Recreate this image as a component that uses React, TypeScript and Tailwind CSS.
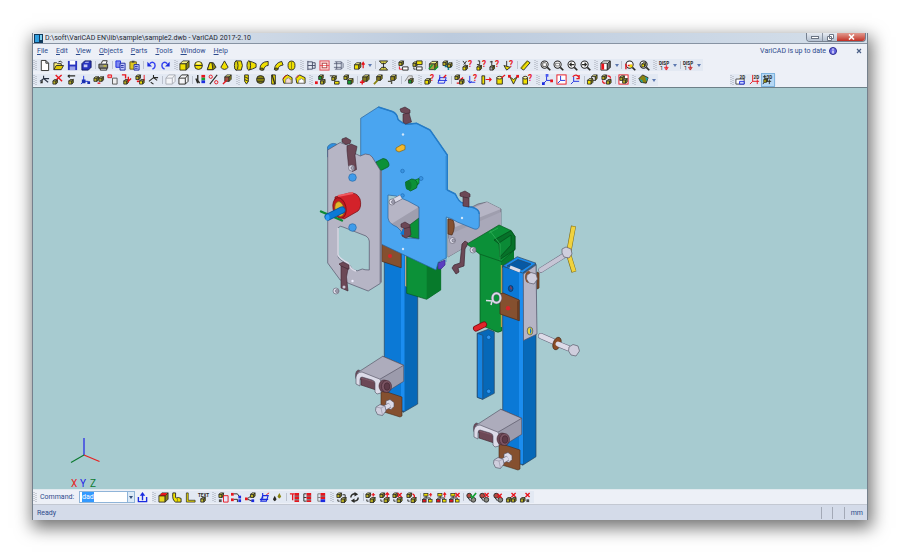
import { useEffect, useRef, useState } from "react"
import type { ReactNode } from "react"

type PathProps = { d: string; c?: string; f?: string; w?: number }
type PartProps = { x?: number; y?: number; s?: number; c?: string }

const YELLOW = "#f0e000"
const OLIVE = "#8a8410"
const RED = "#e8141c"
const BLUE = "#1a2be0"
const GREEN = "#12a032"
const INK = "#2a2a26"

// ---- small parts shared by the toolbar icons (12x12 grid) ----

function P({ d, c = INK, f = "none", w = 1 }: PathProps) {
  return <path d={d} stroke={c} fill={f} strokeWidth={w} />
}

function Cube({ x = 1, y = 1, s = 10, c = YELLOW }: PartProps) {
  const k = s * 0.32
  return (
    <g stroke={INK} strokeWidth="0.9" strokeLinejoin="round">
      <path d={`M${x} ${y + k}l${k} ${-k}h${s - k}l${-k} ${k}z`} fill="#f8f48a" />
      <path d={`M${x} ${y + k}h${s - k}v${s - k}h${k - s}z`} fill={c} />
      <path d={`M${x + s - k} ${y + k}l${k} ${-k}v${s - k}l${-k} ${k}z`} fill={OLIVE} />
    </g>
  )
}

function Ask() {
  return <text x="6.5" y="8" fontSize="9" fontWeight="700" fill={RED}>?</text>
}

function Dot({ x = 2, y = 9, c = RED }: PartProps) {
  return <rect x={x} y={y} width="3" height="3" fill={c} />
}

function Cross({ x = 6, y = 1, c = RED }: PartProps) {
  return <P d={`M${x} ${y}l4.5 4.5m0 -4.5l-4.5 4.5`} c={c} w={1.5} />
}

function Lens({ children }: { children?: ReactNode }) {
  return (
    <>
      <circle cx="5" cy="5" r="3.9" fill="#fff" stroke="#222" strokeWidth="1.1" />
      <P d="M8 8l3.2 3.2" w={1.8} />
      {children}
    </>
  )
}

function Small({ x = 1, y = 6 }: PartProps) {
  return <Cube x={x} y={y} s={5} c="#b8ae22" />
}

function Pair({ children }: { children?: ReactNode }) {
  return (
    <>
      <Small x={1} y={1} />
      <Cube x={5.5} y={6} s={5.5} c="#b8ae22" />
      <P d="M2 8v2h2" />
      {children}
    </>
  )
}

function Tree({ children }: { children?: ReactNode }) {
  return (
    <>
      <rect x="2" y="1.5" width="4.5" height="3" fill={YELLOW} stroke={INK} strokeWidth="0.8" />
      <P d="M4.5 4v3M2 8V6.5h7V8" />
      <rect x="0.5" y="8" width="4" height="3" fill={RED} stroke={INK} strokeWidth="0.8" />
      <rect x="7" y="8" width="4" height="3" fill={YELLOW} stroke={INK} strokeWidth="0.8" />
      {children}
    </>
  )
}

function Balls({ children }: { children?: ReactNode }) {
  return (
    <>
      <circle cx="3.5" cy="4" r="2.6" fill="#b04a42" stroke={INK} />
      <circle cx="8" cy="8.5" r="2.6" fill="#8a8a80" stroke={INK} />
      <P d="M2 6l3 4" />
      {children}
    </>
  )
}

function Disp({ c }: { c: string }) {
  return (
    <>
      <text x="0" y="5" fontSize="5" fontWeight="700" fill="#222">DISP</text>
      <text x="1" y="11" fontSize="6" fill="#222">1</text>
      <P d="M8 5.5v5M6 8l2 3l2-3z" c={c} w={0.9} />
    </>
  )
}

const icons: Record<string, ReactNode> = {
  New: <P d="M2.5 .5h5l3 3v8h-8zM7.5 .5v3h3" f="#fff" />,
  Open: <><P d="M1 10.5V3h3l1 1h4v2" f="#fff27a" /><P d="M1 10.5L3.5 6h8L9 10.5z" f="#e0c800" /><P d="M6 2q3-2 4 1" /></>,
  Save: <><rect x="1" y="1" width="10" height="10" fill="#2834c0" /><rect x="3" y="1" width="6" height="4" fill="#fff" /><rect x="3" y="7" width="6" height="4" fill="#9aa2e8" /></>,
  "Save all": <><path d="M1 4l3-3h7v7l-3 3H1z" fill="#2834c0" stroke="#101860" /><path d="M3 5h4v3H3zM5 2h4l-1 1H4z" fill="#c8ccf6" /></>,
  Print: <><P d="M3.5 4L5 .8h5L9 4" f="#fff" /><P d="M1 4.5h9.5V9H1z" f="#8c8c80" /><P d="M2.5 9h7v2h-7z" f="#eee" /><path d="M6 6h3v1H6z" fill={YELLOW} /></>,
  Copy: <><P d="M1 1h5v7H1z" c={BLUE} f="#7f8af0" /><P d="M5.5 3.5H11V11H5.5zM6.5 6h3M6.5 8h3" c="#1c289c" f="#c4caff" /></>,
  Paste: <><P d="M1 2h7v8H1z" c="#6b5a10" f="#e0c820" /><path d="M3 .8h3v2H3z" fill="#444" /><P d="M5.5 5H11v6H5.5zM6.5 7h3M6.5 9h3" c="#1c289c" f="#c4caff" /></>,
  Undo: <><P d="M4 4q3-3 5.5 0q1.5 4-2.5 6" c="#3240f0" w={1.5} /><path d="M1.5 2v5h5z" fill={BLUE} /></>,
  Redo: <><P d="M8 4Q5 1 2.5 4q-1.5 4 2.5 6" c="#3240f0" w={1.5} /><path d="M10.5 2v5h-5z" fill={BLUE} /></>,
  Box: <Cube />,
  Cylinder: <><circle cx="6" cy="6" r="4.3" fill={YELLOW} stroke={INK} /><P d="M2 6h8" /><ellipse cx="6" cy="3.5" rx="2.5" ry="1" fill="#fbf9a0" /></>,
  Pyramid: <><P d="M4 3h4l3 5l-3 2.5H1.5z" f={OLIVE} /><P d="M4 3h2.5l1 7.5h-6z" f={YELLOW} /></>,
  Cone: <P d="M6 1l4 7q-4 4.5-8 0z" f={YELLOW} />,
  Pipe: <><P d="M3 1h6q2.5 5 0 10H3z" f={YELLOW} /><ellipse cx="3.5" cy="6" rx="2" ry="5" fill="#d9d010" stroke={INK} /></>,
  "Conical pipe": <><P d="M3 1q4 1 8 3v4q-4 2-8 3z" f={YELLOW} /><ellipse cx="3" cy="6" rx="2" ry="5" fill="#d9d010" stroke={INK} /></>,
  Elbow: <><P d="M1 10q0-8 9-8.5V6Q6 6 5 11z" f={YELLOW} /><ellipse cx="3" cy="10" rx="2" ry="1.2" fill={OLIVE} stroke={INK} /></>,
  Bend: <><P d="M1.5 10q1-7 8-8.5l1.5 4Q6 6 5.5 10z" f={YELLOW} /><ellipse cx="3.5" cy="10" rx="2" ry="1.2" fill={OLIVE} stroke={INK} /></>,
  Sphere: <><ellipse cx="6" cy="6" rx="3.8" ry="4.8" fill={YELLOW} stroke={INK} /><P d="M6 1v10" c={OLIVE} /></>,
  Revolve: <P d="M2 1v10M2 2h5v8H2M2 6h8M7 3h3v6H7" c="#454b66" />,
  Sheet: <><rect x="1" y="1" width="10" height="10" fill="#fbd7d7" stroke="#e0404a" /><rect x="3.5" y="3.5" width="5" height="5" fill="#fff" stroke="#b04040" /><P d="M1 6h10" c={RED} w={0.6} /></>,
  Loft: <P d="M2 2h7v8H2M9 2l2 2v4l-2 2M4 2v8M1 4h8M1 8h8" c="#454b66" w={0.8} />,
  Extrude: <><Cube x={0.5} y={3} s={7} /><P d="M10 9V3M8.5 5L10 2.5L11.5 5" c={RED} w={1.3} /></>,
  Section: <><P d="M1.5 1h9L8 4H4zM1.5 11h9L8 8H4z" f="#d8d048" /><P d="M6 3v6" /></>,
  Insert: <><Small x={1} y={1} /><P d="M1.5 7v3h3" c={RED} /><P d="M5 7.5h6V11H5z" f="#fff" /></>,
  "Insert part": <><Small x={1} y={2} /><P d="M5 1h6v4H5z" f={YELLOW} /><P d="M2 8v2h2M5 7.5h6V11H5z" f="#fff" /></>,
  Group: <><Cube x={1.5} y={1.5} s={9} c="#a8a040" /><P d="M1 10l4-5M7 11l4-4" c={GREEN} w={1.5} /></>,
  Move: <><Small x={1} y={1} /><P d="M7 3v8M3 7h8" c="#0a8090" w={1.7} /><Small x={6} y={3} /></>,
  "Check 1": <><P d="M1 1l3 4M5 1L2 5" /><Cube x={1} y={6} s={5} /><Ask /></>,
  "Check 2": <><P d="M2 1h2v4H1" /><Cube x={1} y={6} s={5} /><Ask /></>,
  "Check 3": <><P d="M3 1v5M1 2h3" /><Cube x={1} y={6} s={5} c="#aaa" /><Ask /></>,
  "Check 4": <><P d="M4 1v6" /><P d="M1 6l3 5l4-3z" f={YELLOW} /><Ask /></>,
  Measure: <><P d="M1 9l7-8l3 2l-7 8z" f={YELLOW} /><P d="M1 9l7-8" c={OLIVE} w={1.5} /></>,
  "Zoom window": <Lens><P d="M3 3h3l1 1v3H3z" w={0.8} /></Lens>,
  "Zoom all": <Lens><rect x="3" y="3.5" width="4" height="3" fill="none" stroke="#555" strokeWidth="0.8" /></Lens>,
  "Zoom previous": <Lens><P d="M8 5H3M5 3L3 5l2 2" w={1.2} /></Lens>,
  "Zoom next": <Lens><P d="M2 5h5M5 3l2 2l-2 2" w={1.2} /></Lens>,
  Shade: <><P d="M1 3.5L4 1h7v7l-3 3H1zM1 3.5h7V11" f="#fff" /><path d="M1.5 4h3v6.5h-3z" fill={RED} /><P d="M8 4l3-3v7l-3 3z" f="#777" /></>,
  Rotate: <Lens><P d="M1 10V4M3 6h5" c={RED} w={1.5} /><path d="M5 5h3v3H5z" fill={YELLOW} /></Lens>,
  "Zoom part": <Lens><Cube x={3} y={3} s={4.5} /></Lens>,
  "Display 1": <Disp c={RED} />,
  "Display 2": <Disp c="#c02020" />,

  Axis: <><P d="M1 8l4-3l5 4M5 5V2M5 5h6" c="#283040" w={1.2} /><path d="M1 10l3-4v4z" fill={INK} /></>,
  Delete: <><Small x={1} y={6} /><P d="M5 6l5.5-5M4 1l7 7" c={RED} w={1.5} /></>,
  "Move back": <><P d="M2 2h8M2 2l2-1M2 2l2 2" w={1.3} /><Small x={3} y={6} /></>,
  Triad: <><P d="M4 2v6l-3 3M4 8h5" c={BLUE} /><path d="M2 6h4v4H2zM8 8h3v3H8z" fill="#1830b0" /></>,
  Mirror: <><Small x={1} y={3} /><Small x={6.5} y={3} /><P d="M5 10h3" c={RED} w={1.5} /></>,
  "Array item": <><P d="M1 1h4v3H1z" c={RED} f="#f6a0a0" /><P d="M6 4.5h5V11H6z" c="#555" f="#eee" /></>,
  "Delete part": <><P d="M1 1h4v4" c={RED} w={1.5} /><Small x={3} y={6} /><P d="M8 3v5l3-3" c={RED} w={1.5} /></>,
  "Delete set": <><Small x={1} y={1} /><P d="M2 8h6" c={RED} w={1.8} /><Cube x={5} y={6} s={5} /><P d="M10 1v6" c={RED} /></>,
  Transform: <P d="M1 8l5-4l4 3M6 4V1M6 4h5M3 9l3 2" w={1.2} />,
  Wire: <P d="M1 4.5L4 1h7v7l-3 3H1zM1 4.5h7V11M8 4.5L11 1" c="#a8acb4" f="#f4f5f8" />,
  Hidden: <P d="M1 4.5L4 1h7v7l-3 3H1zM1 4.5h7V11M8 4.5L11 1" f="#f4f5f8" />,
  Colors: <><P d="M3 1v6l2 3M1 5l2 5" w={1.5} /><path d="M7 1h4v3H7z" fill={RED} /><path d="M7 4h4v3H7z" fill={GREEN} /><path d="M7 7h4v3H7z" fill={BLUE} /></>,
  Cut: <><P d="M2 11l8-10" w={1.2} /><circle cx="3" cy="3" r="1.8" fill="none" stroke={RED} /><circle cx="9" cy="9" r="1.8" fill="none" stroke={RED} /></>,
  Blend: <><Cube x={3} y={1} s={7} c="#a05040" /><P d="M1 11l4-4" c={RED} w={1.5} /></>,
  Thread: <><P d="M4 1h4v7l-2 3l-2-3z" f={YELLOW} /><P d="M4 3l4 2M4 6l4 2" /></>,
  Hole: <><circle cx="6" cy="6" r="4.3" fill={OLIVE} stroke={INK} /><P d="M2 5h8M2 8h8" w={0.8} /></>,
  Groove: <><P d="M4 1h4v10H4z" f={YELLOW} /><P d="M4.5 1l3 10" w={1.5} /></>,
  Fillet: <><P d="M1 6q1-4 5-5l5 3v6H2z" f={YELLOW} /><P d="M4 10V6l3-2l3 3v3z" c="#888" f="#f3dada" /><P d="M1 5l4-4" c={RED} /></>,
  Chamfer: <><P d="M1 5l4-4l6 3v6H2z" f={YELLOW} /><P d="M4 10V7l3-2l3 2v3z" c="#888" f="#fff" /><P d="M1 4l3-3" c={RED} /></>,
  Union: <><Dot x={0} y={8} /><Cube x={4} y={1} s={5} c={GREEN} /><Small x={6} y={6} /></>,
  Subtract: <><P d="M1 2h5v5" f="#ddd" /><Small x={3} y={2} /><P d="M6 8h5v3H6z" f={YELLOW} /></>,
  Intersect: <><Small x={1} y={1} /><Cube x={5} y={5} s={6} c={GREEN} /></>,
  "Solid add": <><Cube x={4} y={1} s={7} c="#807820" /><P d="M1 9h5M3.5 6.5v5" c={RED} w={1.5} /></>,
  "Solid cut": <><Cube x={4} y={1} s={6} c="#807820" /><P d="M1 11l4-4" c={OLIVE} w={2} /></>,
  "Solid split": <><Cube x={4} y={1} s={6} c="#a09020" /><P d="M1 8h4v3" c="#554" w={1.5} /></>,
  Explode: <><P d="M1 8l4-6h4v3" c="#888" f="#ddd" /><Cube x={5} y={5} s={5} c={GREEN} /></>,
  "Part info": <><Cube x={1} y={5} s={6} /><Ask /></>,
  Weigh: <><P d="M1 10l2-6h7l-2 6zM3 1v6M1 7h10" c={BLUE} /><P d="M7 4l3-3" c={RED} w={1.5} /></>,
  Link: <><Small x={1} y={1} /><P d="M6 7l4-3M3 10h5" c={RED} w={1.5} /><Small x={6} y={6} /></>,
  "Link info": <><P d="M3 2v7h6M1 7l2 3l2-2" c={BLUE} /><Ask /></>,
  Dimension: <><P d="M1 2h3v9H1z" f={YELLOW} /><P d="M5 6h6M9 4l2 2l-2 2" c={RED} w={1.3} /></>,
  "Cyl info": <><P d="M2 4h6v7H2z" f={YELLOW} /><ellipse cx="5" cy="4" rx="3" ry="1.5" fill="#fbf9a0" stroke={INK} /><P d="M7 4l4-3" c={RED} w={1.3} /></>,
  Angle: <><P d="M2 3l4 8l4-8l-4 3z" f={YELLOW} /><Dot x={0} y={1} /><Dot x={9} y={1} /></>,
  Volume: <><P d="M1 4h5v7H1z" f={YELLOW} /><ellipse cx="3.5" cy="4" rx="2.5" ry="1.5" fill="#fbf9a0" stroke={INK} /><Ask /></>,
  "Axes point": <><P d="M5 1v6l-4 4M5 7h6" c={BLUE} /><Dot x={0} y={9} c={BLUE} /><Dot x={4} y={0} c="#4a58f0" /><Dot x={9} y={6} /></>,
  "Axes plane": <><rect x="1" y="1" width="10" height="10" fill="#fff" stroke={RED} /><P d="M5 2v5l-3 3M5 7h5" c={BLUE} /></>,
  "Axes turn": <><P d="M4 3v5l-3 3M4 8h6" c={BLUE} /><P d="M3 3q4-4 7 1M10 1v4H7" c={RED} w={1.3} /></>,
  Assembly: <><Cube x={5} y={1} s={6} c="#fff" /><Cube x={0.5} y={5} s={6} /></>,
  Update: <><Small x={1} y={1} /><Small x={6} y={6} /><P d="M7 2q4 0 3 3M5 10Q1 10 2 7" c={RED} w={1.3} /></>,
  "Update all": <><rect x="1" y="1" width="10" height="10" fill="#fff" stroke={RED} /><Small x={2} y={2} /><Small x={5} y={5} /></>,
  Render: <><P d="M1 5l4-4l6 3l-2 6l-6-1z" f={OLIVE} /><path d="M1 5l4 2v3zM8 3l3 2l-2 3z" fill="#16a0a8" /></>,
  "View 2D": <><text x="5" y="5" fontSize="5" fontWeight="700" fill={INK}>2D</text><P d="M1 5.5h9V11H1z" c="#444" f="#fff" /><P d="M5 8h5v3H5z" c={BLUE} f="#cfd6fa" /></>,
  "View 2D3D": <><text x="5" y="5" fontSize="5" fontWeight="700" fill={INK}>2D</text><P d="M4 1v7M1 11l3-3h7M9 6v5" c={RED} /></>,
  "View 3D": <><text x="5" y="5" fontSize="5" fontWeight="700" fill={INK}>3D</text><P d="M3 1v7l-2 3M3 8h7M1 3h4M8 6v5" /><Cube x={2} y={5} s={4} /></>,

  Send: <><P d="M1.5 5.5v5h9v-5" c={BLUE} w={1.5} /><P d="M6 9V3" c={BLUE} w={1.5} /><path d="M3 4l3-4l3 4z" fill={BLUE} /></>,
  "Red box": <><Cube c="#e8d820" /><path d="M2 4l2-3h6L8 4z" fill={RED} /><P d="M2 4h6" c="#6b1010" w={0.8} /></>,
  Tube: <><P d="M2 1h3v5q1 1 3 0l3 1v4H5Q1 9 2 1z" f={YELLOW} /><P d="M7 7v4" c={OLIVE} /></>,
  Profile: <P d="M1.5 1h2v8H11v2H1.5z" f={YELLOW} w={0.8} />,
  "Text part": <><text x="0" y="5" fontSize="5" fontWeight="700" fill={INK}>TEXT</text><Cube x={3} y={6} s={5} c="#c8c030" /></>,
  "Copy part": <><Small x={1} y={1} /><P d="M6 4h5v7H6z" c={RED} f="#e6e6f8" /><Dot x={1} y={8} c="#555" /></>,
  "Link tree": <><Dot x={0} y={1} /><Dot x={0} y={7} /><P d="M3 2h4l2 3M3 8h4v3" /><Dot x={8} y={4} c={BLUE} /><Dot x={8} y={8} c={BLUE} /></>,
  "Link part": <><Dot x={0} y={6} /><P d="M3 7l4-3M3 8l5 2" /><Small x={6} y={1} /><Dot x={7} y={8} c={BLUE} /></>,
  Frame: <><P d="M2 10l2-6h6l-2 6zM4 1v6M1 8h9" c={BLUE} w={1.2} /><P d="M8 3l3-2" c={RED} /></>,
  Drops: <><path d="M3 4l2 4q-2 4-4 0z" fill={INK} /><path d="M8 1l2 4q-2 4-4 0z" fill={OLIVE} /></>,
  "List 1": <><P d="M1 2h5M4 2v7" c={RED} w={1.5} /><path d="M6 1h5v3H6zM6 5h5v3H6zM6 9h5v2H6z" fill={RED} /><P d="M6 4.5h5M6 8.5h5" w={0.7} /></>,
  "List 2": <><P d="M2 2v8M2 2h3M2 6h3M2 10h3" /><path d="M5 1h5v3H5zM5 5h5v3H5zM5 9h5v2H5z" fill={RED} /><P d="M5 4.5h5M5 8.5h5" w={0.7} /></>,
  "List 3": <><P d="M2 2v8M2 2h3M2 6h3M2 10h3" c="#777" /><path d="M5 1h5v3H5zM5 5h5v3H5z" fill={RED} /><path d="M5 8h5v3H5z" fill={BLUE} /><P d="M5 4.5h5" w={0.7} /></>,
  "Swap part": <Pair><P d="M7 3h3v3" /></Pair>,
  Refresh: <><P d="M2 6q0-4 5-4M10 6q0 4-5 4" w={1.6} /><path d="M6 0l4 2.5L6 5zM6 7L2 9.5L6 12z" fill={INK} /></>,
  "Add part": <Pair><P d="M7 3h4M9 1v4" c={RED} w={1.3} /></Pair>,
  "Lift part": <Pair><P d="M9 6V1M7 3l2-2l2 2" c={RED} w={1.3} /></Pair>,
  "Remove part": <Pair><Cross /></Pair>,
  "Turn part": <Pair><P d="M7 2q3 1 2 4" c={RED} w={1.3} /></Pair>,
  "Tree add": <Tree><P d="M7.5 3H11M9.5 1v4" c={RED} w={1.2} /></Tree>,
  "Tree lift": <Tree><P d="M9.5 6V1M8 3l1.5-2L11 3" c={RED} w={1.2} /></Tree>,
  "Tree remove": <Tree><Cross x={7} /></Tree>,
  Accept: <Balls><P d="M5 3l2 3l4-5" c={GREEN} w={1.8} /></Balls>,
  Reject: <Balls><Cross /></Balls>,
  "Reject all": <Balls><Cross x={5} y={2} /></Balls>,
  "Reject 1": <><Small x={0.5} y={6} /><Small x={6} y={6} /><Cross x={6} /></>,
  "Reject 2": <><Small x={0.5} y={6} /><Dot x={7} y={8} c="#444" /><Cross x={6} /></>,
}

type Group = { width: string; items: string[] }

const row1: Group[] = [
  { width: "w-[141px]", items: ["New", "Open", "Save", "Save all", "|", "Print", "|", "Copy", "Paste", "|", "Undo", "Redo"] },
  { width: "w-[126px]", items: ["Box", "Cylinder", "Pyramid", "Cone", "Pipe", "Conical pipe", "Elbow", "Bend", "Sphere"] },
  { width: "w-[47px]", items: ["Revolve", "Sheet", "Loft"] },
  { width: "w-[45px]", items: ["Extrude", "v", "|", "Section"] },
  { width: "w-[64px]", items: ["Insert", "Insert part", "|", "Group", "Move"] },
  { width: "w-[78px]", items: ["Check 1", "Check 2", "Check 3", "Check 4", "|", "Measure"] },
  { width: "w-[60px]", items: ["Zoom window", "Zoom all", "Zoom previous", "Zoom next"] },
  { width: "w-[59px]", items: ["Shade", "v", "|", "Rotate", "Zoom part"] },
  { width: "w-[50px]", items: ["Display 1", "v", "|", "Display 2", "v"] },
]

const row2: Group[] = [
  { width: "w-[203px]", items: ["Axis", "Delete", "Move back", "Triad", "Mirror", "Array item", "Delete part", "Delete set", "Transform", "|", "Wire", "Hidden", "|", "Colors", "Cut", "Blend"] },
  { width: "w-[73px]", items: ["Thread", "Hole", "Groove", "Fillet", "Chamfer"] },
  { width: "w-[109px]", items: ["Union", "Subtract", "Intersect", "|", "Solid add", "Solid cut", "Solid split", "|", "Explode"] },
  { width: "w-[118px]", items: ["Part info", "Weigh", "|", "Link", "Link info", "Dimension", "Cyl info", "Angle", "Volume"] },
  { width: "w-[96px]", items: ["Axes point", "Axes plane", "Axes turn", "|", "Assembly", "Update", "|", "Update all"] },
  { width: "w-[26px]", items: ["Render", "v"] },
]

const viewModes: Group = { width: "w-[46px]", items: ["View 2D", "View 2D3D", "View 3D"] }

const bottomRow: Group[] = [
  { width: "w-[60px]", items: ["Red box", "Tube", "Profile", "Text part"] },
  { width: "w-[118px]", items: ["Copy part", "Link tree", "Link part", "Frame", "Drops", "|", "List 1", "List 2", "List 3"] },
  { width: "w-[204px]", items: ["Swap part", "Refresh", "|", "Add part", "Lift part", "Remove part", "Turn part", "|", "Tree add", "Tree lift", "Tree remove", "|", "Accept", "Reject", "Reject all", "Reject 1", "Reject 2"] },
]

function Grip() {
  return (
    <svg className="w-1 h-3 shrink-0" viewBox="0 0 4 12" aria-hidden="true">
      <path d="M1 1v10M3 2v10" stroke="#a3a8b4" strokeDasharray="1 1" />
    </svg>
  )
}

function ToolGroup({ group, active }: { group: Group; active?: string }) {
  return (
    <div className={`${group.width} flex items-center justify-between shrink-0 pr-0.5 bg-[#e3e9f3]`}>
      <Grip />
      {group.items.map((name, i) => {
        if (name === "|") return <span key={i} className="w-px h-2 bg-[#bcc2ce]" />
        if (name === "v") {
          return (
            <button key={i} aria-label="More" className="w-1 h-3 flex items-center justify-center">
              <svg className="w-1 h-1 shrink-0" viewBox="0 0 4 4"><path d="M0 1h4l-2 3z" fill="#5c78b0" /></svg>
            </button>
          )
        }
        return (
          <button
            key={i}
            title={name}
            className={name === active ? "w-3 h-3 bg-[#b5d8f5] outline outline-[#7fb4de]" : "w-3 h-3 hover:bg-[#cfe2f6]"}
          >
            <svg className="w-[11px] h-[11px] overflow-visible" viewBox="0 0 12 12">{icons[name]}</svg>
          </button>
        )
      })}
    </div>
  )
}

// ---- the assembly ----

const BROWN = "#85502f"
const CLIP = "#6c4856"
const STEEL = "#b6b5c5"
const STEEL_LIGHT = "#dcdbe8"
const POST = "#0b79d6"
const POST_DARK = "#0668b8"
const PLATE = "#4aa5f0"
const EDGE = "#2a4560"

function Clamp() {
  return (
    <g strokeWidth="0.6" stroke="#4c4a5a" strokeLinejoin="round">
      <path d="M499 445l3-1l18 6v19l-2 1l-19-6z" fill={BROWN} stroke="#4a2a16" />
      <ellipse cx="476.5" cy="428.5" rx="3" ry="5.5" fill={CLIP} />
      <path d="M500.7 409.3l21 9v16l-16 10l-12-4z" fill="#9c9bac" />
      <path d="M500.7 409.3l21 9l-26.5 15.5l-20-8z" fill="#adacbc" />
      <path d="M479 429l15 4v10l-15-5z" fill={CLIP} stroke="#40242e" />
      <path d="M479 431l14 4" stroke="#8d6474" />
      <path d="M474 430q1-5 6-5l15 6q5 1 4 6v9l-4 1l-2-2v-9q0-2-3-3l-10-3q-2 0-2 3v6l-4-2z" fill={STEEL_LIGHT} />
      <ellipse cx="502" cy="439" rx="5" ry="6" fill={CLIP} stroke="#40242e" />
      <ellipse cx="504.5" cy="439.5" rx="5" ry="6" fill="#7c5564" stroke="#40242e" />
      <ellipse cx="505" cy="439.5" rx="2.8" ry="3.8" fill="#5e3a48" stroke="#40242e" />
      <path d="M504 454l4-1.5l4 3v4l-3 3l-5-2z" fill={STEEL_LIGHT} />
      <path d="M499 463l9-5" stroke="#6f6e80" strokeWidth="5" />
      <path d="M499 463l9-5" stroke={STEEL_LIGHT} strokeWidth="4" />
      <path d="M494 460l4-2.5l5 1.5l1 5l-3.5 4.5l-5-1l-2-4z" fill="#cfcedd" />
      <path d="M494 460l5 1l4-2M499 461l1.5 7" fill="none" stroke="#908fa2" />
    </g>
  )
}

function Clip({ d, hook }: { d: string; hook: string }) {
  return (
    <g fill={CLIP} stroke="#3c2430" strokeWidth="0.6">
      <path d={hook} />
      <path d={d} />
    </g>
  )
}

function Nut({ x, y }: { x: number; y: number }) {
  return (
    <g stroke="#5c5b6c" strokeWidth="0.6">
      <circle cx={x} cy={y} r="3" fill={STEEL_LIGHT} />
      <circle cx={x + 1} cy={y} r="1.5" fill="#a9a8ba" />
    </g>
  )
}

function Model() {
  return (
    <g strokeLinejoin="round" strokeWidth="0.7">
      {/* grey cross arm */}
      <path d="M388 206l14-5l20 8v30h-33zM448 219l30-15l9-2l14 7v17l-53 31z" fill="#9f9eae" stroke="#5b5a6a" />
      <path d="M388 226l34-21l-20-6l-14 6zM448 230l53-21l-14-7l-39 17z" fill={STEEL} stroke="none" />
      <path d="M455 232l46-20v14l-53 31v-18z" fill="#a9a8b9" />
      <path d="M448 219v15l4 1q4-8 1-15z" fill={BROWN} stroke="#4a2a16" />
      <path d="M407 227l12-9v21l-12-3z" fill="#0c9138" stroke="#075a20" />

      {/* left post */}
      <path d="M384.3 240h19v172l-19-7z" fill={POST} stroke={EDGE} />
      <path d="M403.3 248h14.400v156l-14.400 8.300z" fill={POST_DARK} stroke={EDGE} />
      <path d="M401 250h3.5v161l-3.5-1z" fill="#1b8df0" />
      <path d="M405 254l2-1v34l-2-1z" fill="#b5a68e" />
      <path d="M406.7 252l34 12v26l-14 9.300l-20-6z" fill="#0c9138" stroke="#075a20" />
      <path d="M426.7 262h14v28l-14 9.300z" fill="#077a2b" />
      <path d="M381.7 243.3l19.5 7v17.5l-19.5-6.5z" fill={BROWN} stroke="#4a2a16" />
      <circle cx="390" cy="256" r="2" fill="#d8242a" />
      <path d="M438 263l7-3v5l-4 4h-3z" fill="#5a3fc0" stroke="#3c2a90" />

      {/* blue back plate, with its window cut out */}
      <path
        fillRule="evenodd"
        d="M360.7 118.3L378.3 107l14 4.5q5 2 5.7 8q4 4 8.7 4.800l10-1l13.3 6.700l17.3 25v35l8 4q4 9 8 9q5 5 8 4q8 2 8 7v12q-1 4-5 3l-17-7q-6-4-11-5v41l-8 4l-2.3 8L381 244v-14l-20.3-10zM388 195l8 1l12 5l11 6v32l-9-1q-8 2-9-7q-4-5-8-6q-5-3-5-7z"
        fill={PLATE}
        stroke="#28639c"
      />
      <path d="M378.3 107l14 4.5q5 2 5.7 8q4 4 8.7 4.800l10-1l13.3 6.700l17.3 25v35l8 4q4 9 8 9q5 5 8 4q8 2 8 7" fill="none" stroke="#247cc8" strokeWidth="1.4" />
      <path d="M446 156v34M446 218v44M381.5 170v74" stroke="#2f86d0" />
      <circle cx="403" cy="134.5" r="1.2" fill="#cfe6fa" />
      <circle cx="402.5" cy="171" r="1.8" fill="#3b95e2" stroke="#1f6eb8" />
      <circle cx="402.5" cy="195.5" r="1.8" fill="#3b95e2" stroke="#1f6eb8" />
      <circle cx="421" cy="178.5" r="2" fill="#3b95e2" stroke="#1f6eb8" />
      <circle cx="403" cy="249" r="1.2" fill="#cfe6fa" />
      <circle cx="462" cy="218" r="1.2" fill="#cfe6fa" />
      <path d="M396 148l6-3.5l3 1v4l-6 2.5l-3-1.5z" fill="#f3b92c" stroke="#8a6410" />
      <path d="M376 162l7-3.5q4 0 5.5 4t-1.5 5l-6 3q-5-2-5-8.5z" fill="#0c9138" stroke="#075a20" />
      <path d="M415 180l4-1.5v5l-3 2z" fill="#12b048" stroke="#075a20" />
      <path d="M405.5 182l6-3q5 0 6 5l-1 4l-6 3q-5-2-5-9z" fill="#0c9138" stroke="#075a20" />
      <ellipse cx="408.5" cy="185.5" rx="3" ry="4.5" fill="#0a7a30" />
      <path d="M392 202l9-5" stroke="#6f6e80" strokeWidth="5" />
      <path d="M391.5 202l9.5-5" stroke={STEEL_LIGHT} strokeWidth="4" />
      <Nut x={392} y={202} />
      <Clip hook="M400 109l5-2l5 3v3l-3 1l-6-2z" d="M403 114l6-1l2.5 9l-6 2l-2.5-2z" />
      <Clip hook="M460 193l5-2l5 3v3l-4 1l-6-2z" d="M463 197l6 1v9l-6-1z" />
      <Clip hook="M401 224l4-2l5 3v3l-4 1l-5-2z" d="M403 229l7-2l1 8l-5 3l-4-2z" />
      <path d="M400 234l4-6v7z" fill={POST} />

      {/* grey front plate */}
      <path d="M327.5 147q3-5 9-3v8l-9 5z" fill="#2e90e0" stroke="#28639c" />
      <path
        fillRule="evenodd"
        d="M327.7 150l12.5-7.5l8 3l5 7l7 3.5l5-2q5 0 7 3l8 13v113.5l-12 7.5l-28-11l-12.5-17zM338 228q2-3 5-1l23 9q3 2 3.3 5v29q-5 0-7-1q-5 3-9 1q-4-6-6-7q-9-3-9.3-7z"
        fill={STEEL}
        stroke="#55546a"
      />
      <path d="M381 170.5v112" stroke="#77768a" strokeWidth="1.6" />
      <path d="M338 228v27q2 4 10 8q3 7 8 8" stroke={STEEL_LIGHT} strokeWidth="1.6" fill="none" />
      <circle cx="352.5" cy="177.5" r="3.8" fill="#3f9bea" stroke="#286cab" />
      <circle cx="352.5" cy="227.5" r="3.8" fill="#3f9bea" stroke="#286cab" />
      <circle cx="352.5" cy="281" r="1.2" fill="#eef" />
      <Clip hook="M342 139l4-1.5l5 3l-1 3l-4 1l-4-2.5z" d="M347 146l4-2l6 2.5l-1 5l-1 4l1.5 14l-4 2l-4-6l-1.5-15z" />
      <Nut x={351.5} y={168} />
      <Clip hook="M339 264l4-2l6 3v4l-4 1z" d="M341 266l7 3l-1.5 8l1.5 14l-7-3v-13z" />
      <circle cx="344" cy="287" r="1.5" fill="#c9c8d6" />
      <Nut x={336} y={291} />

      {/* roller and its handle */}
      <path d="M335 197l14-4q8-1 11 6q2 8-2 12l-14 8q-10-3-9-22z" fill="#d3222a" stroke="#74090e" />
      <path d="M338 196l15-3" stroke="#f0595f" strokeWidth="2" />
      <ellipse cx="339.5" cy="208" rx="6.5" ry="10.5" fill="#c01820" stroke="#74090e" transform="rotate(-12 339.5 208)" />
      <ellipse cx="339.5" cy="209" rx="4.5" ry="7.5" fill="#e2b62c" stroke="#8a6410" transform="rotate(-12 339.5 209)" />
      <path d="M321 211.5l21 9" stroke="#0c8a34" strokeWidth="2.4" strokeLinecap="round" />
      <path d="M328 217l14-7" stroke="#0a559a" strokeWidth="7" strokeLinecap="round" />
      <path d="M328 217l14-7" stroke={POST} strokeWidth="5.5" strokeLinecap="round" />
      <ellipse cx="327.5" cy="217.5" rx="2" ry="3" fill="#2a9af5" />

      <Nut x={452.5} y={240.5} />
      <path d="M462 244l3-3l3 2l-3 6l-1 17l-6 2l1 4l-3 2l-4-6l2-3l6-2z" fill={CLIP} stroke="#3c2430" />

      {/* green bracket */}
      <path d="M480 246h22v84.700q-4 3-8 0l-14-6z" fill="#0c9138" stroke="#075a20" />
      <path d="M500 258l14-8v18h-12z" fill="#077a2b" />
      <path d="M467 244l22-13l10-6l12 5.5l4 6v13l-13.5 12l-22-7.5z" fill="#0b9038" stroke="#075a20" />
      <path d="M494 240l17-9.5l4 6v13l-15 10v-15z" fill="#067229" stroke="#054a1a" />
      <path d="M499 243l12-8v10l-11 12z" fill="#0b8a36" stroke="#054a1a" />
      <path d="M490 231l10 13v16M489 233l9-5" fill="none" stroke="#33b45c" />
      <path d="M501.5 265v62" stroke="#b5a24a" strokeWidth="1.4" />
      <Nut x={473} y={250} />

      {/* short post */}
      <path d="M477.3 333.3l11-4l6 2.5v61.5l-11.5 6l-5.5-2z" fill={POST_DARK} stroke={EDGE} />
      <path d="M477.3 333.3l5.5 2v64l-5.5-2z" fill="#1684e2" stroke={EDGE} />
      <circle cx="488.7" cy="337.3" r="2.2" fill="#2c94ee" stroke="#064f90" />
      <circle cx="488.7" cy="391.3" r="2.2" fill="#2c94ee" stroke="#064f90" />
      <path d="M476 328.5l8-4" stroke="#7c0c10" strokeWidth="6" strokeLinecap="round" />
      <path d="M476 328.5l8-4" stroke="#e0242a" strokeWidth="4.5" strokeLinecap="round" />

      {/* right post */}
      <path d="M502.7 266l20 7v192l-20-7z" fill={POST} stroke={EDGE} />
      <path d="M522.7 273l13.3-9v192.700l-13.3 8.5z" fill={POST_DARK} stroke={EDGE} />
      <path d="M519 272l4 1v191l-4-1z" fill="#1b8df0" />
      <path d="M502.7 266l14.6-9.300l18.7 6.5l-13.5 9.800z" fill="#1b8df0" stroke={EDGE} />
      <path d="M507 266l11-6.5l13 4.5l-9 6z" fill="#0759a4" stroke={EDGE} />
      <path d="M510 267l10 4" stroke={STEEL_LIGHT} strokeWidth="3" />
      <path d="M537 272l2 1v15l-2 1z" fill={BROWN} stroke="#4a2a16" />
      <path d="M523.3 274l12.7-9l1 69l-13.5 6.5z" fill={STEEL} stroke="#55546a" />
      <ellipse cx="530" cy="331" rx="2.8" ry="4" fill="#e8d23c" stroke="#3a4a70" />
      <path d="M530 328q3 3 0 6z" fill={POST} />
      <ellipse cx="528.5" cy="277" rx="3.5" ry="6" fill={BROWN} />
      <path d="M527 275l4-2.5l5 1.5l1.5 5l-3.5 5l-5-1l-2.5-4z" fill="#cfcedd" stroke="#5c5b6c" />
      <ellipse cx="510.7" cy="288.5" rx="2.3" ry="3" fill="#075ba6" stroke="#172a50" />
      <path d="M510 286q3 2 1 4z" fill="#c23030" />
      <path d="M500 294l3-1l16.3 7v20.700l-19.3-6.700z" fill={BROWN} stroke="#4a2a16" />
      <path d="M517 301.5l2.3-1v20l-2.3-.5z" fill="#6c3c20" />
      <circle cx="508" cy="308.3" r="2.2" fill="#d8242a" />
      <ellipse cx="496.5" cy="298" rx="4" ry="4.8" fill="none" stroke="#66657a" strokeWidth="3" />
      <ellipse cx="496.5" cy="298" rx="4" ry="4.8" fill="none" stroke={STEEL_LIGHT} strokeWidth="2" />
      <path d="M493 301l-7-.5M492 301l-1 4" stroke={STEEL_LIGHT} strokeWidth="1.5" />

      {/* t-handle screw and loose bolt */}
      <path d="M573.5 226l-4.5 25M568.5 254l5.5 18" stroke="#7a6a18" strokeWidth="5" />
      <path d="M573.5 226.5l-4.5 24.5M568.5 254l5.5 17.5" stroke="#f0d23e" strokeWidth="4" />
      <path d="M541 270l24-15" stroke="#66657a" strokeWidth="5.5" strokeLinecap="round" />
      <path d="M541 270l24-15" stroke="#c6c5d5" strokeWidth="4.5" strokeLinecap="round" />
      <path d="M562 249l4-2l5 2l1 5l-3 4l-5-1l-2-4z" fill="#cfcedd" stroke="#5c5b6c" />
      <path d="M541 336l16 7" stroke="#66657a" strokeWidth="6" strokeLinecap="round" />
      <path d="M541 336l16 7" stroke={STEEL_LIGHT} strokeWidth="4.8" strokeLinecap="round" />
      <ellipse cx="557" cy="343.5" rx="3.8" ry="6.5" fill="#8a4c26" stroke="#4a2a16" transform="rotate(20 557 343.5)" />
      <path d="M559 344.5l10 4" stroke="#66657a" strokeWidth="6" />
      <path d="M558 344l11 4.5" stroke={STEEL_LIGHT} strokeWidth="4.8" strokeLinecap="round" />
      <path d="M569 347l4-2.5l5 1.5l1.5 5l-3.5 5l-5-1l-2.5-4z" fill="#cfcedd" stroke="#5c5b6c" />
    </g>
  )
}

function Viewport() {
  return (
    <svg
      role="img"
      aria-label="3D assembly"
      className="w-full aspect-[834/401] bg-[#a7cbd0]"
      viewBox="33 88 834 401"
      fill="none"
    >
      <Model />
      <Clamp />
      <g transform="translate(-118 -53)"><Clamp /></g>
      <g strokeWidth="1.2">
        <path d="M84 455V438" stroke="#2020e8" />
        <path d="M84 455l15.500 6.500" stroke="#e82020" />
        <path d="M84 455l-13 7.500" stroke="#0c7a30" />
      </g>
      <g fontSize="10">
        <text x="71" y="487" fill="#e82020">X</text>
        <text x="80" y="487" fill="#2020e8">Y</text>
        <text x="90" y="487" fill="#0c7a30">Z</text>
      </g>
    </svg>
  )
}

const menus = ["File", "Edit", "View", "Objects", "Parts", "Tools", "Window", "Help"]

function TitleBar() {
  return (
    <header className="h-[11px] flex items-center pl-px bg-linear-to-r from-[#e2e8ef] via-[#bccbde] to-[#d5dfea] border-b border-[#8793a3]">
      <svg className="w-[9px] h-[9px]" viewBox="0 0 9 9" aria-hidden="true">
        <rect width="9" height="9" fill="#123a5c" />
        <path d="M1 1h4v7H1z" fill="#2f9fe0" />
        <path d="M6 1h2v5H6z" fill="#7fd0f0" />
      </svg>
      <h1 className="ml-0.5 text-[7px] leading-[10px] text-[#1c2430]">
        D:\soft\VariCAD EN\lib\sample\sample2.dwb - VariCAD 2017-2.10
      </h1>
      <div className="ml-auto mr-px self-start flex h-[9px] rounded-b-sm border border-t-0 border-[#76808f] overflow-hidden">
        <button aria-label="Minimize" className="w-4 flex items-center justify-center bg-linear-to-b from-[#e6ebf2] to-[#b4c0d0] border-r border-[#8a94a3]">
          <span className="w-2 h-[3px] bg-white border border-[#6c7584]" />
        </button>
        <button aria-label="Restore" className="w-[14px] flex items-center justify-center bg-linear-to-b from-[#e6ebf2] to-[#b4c0d0]">
          <svg className="w-[7px] h-[7px]" viewBox="0 0 7 7" fill="#fff" stroke="#6c7584"><path d="M2.5 .5h4v4h-4zM.5 2.5h4v4h-4z" /></svg>
        </button>
        <button aria-label="Close" className="w-[28px] flex items-center justify-center bg-linear-to-b from-[#e09a90] to-[#c02a22]">
          <svg className="w-[7px] h-[6px]" viewBox="0 0 7 6"><path d="M1 .5l5 5M6 .5l-5 5" stroke="#fff" strokeWidth="1.6" /></svg>
        </button>
      </div>
    </header>
  )
}

export default function App() {
  const [command, setCommand] = useState("dad")
  const commandRef = useRef<HTMLInputElement>(null)

  useEffect(() => {
    commandRef.current?.focus()
    commandRef.current?.select()
  }, [])

  return (
    <div className="min-h-screen bg-white px-8 pt-[33px] pb-8 font-[Roboto,'Noto_Sans',sans-serif] text-[#2c4a8c]">
      <div className="flex flex-col border-l border-r border-[#75808c] bg-[#edf0f7] shadow-[2px_6px_16px_2px_rgba(0,0,0,0.55)]">
        <TitleBar />

        <div className="h-[14px] flex items-center px-1 text-[7px] leading-3">
          <nav className="flex gap-2">
            {menus.map((m) => (
              <button key={m} className="hover:bg-[#cfe2f6]">
                <span className="underline">{m[0]}</span>{m.slice(1)}
              </button>
            ))}
          </nav>
          <span className="ml-auto">VariCAD is up to date</span>
          <svg className="ml-[3px] w-2 h-2" viewBox="0 0 8 8" aria-hidden="true">
            <circle cx="4" cy="4" r="3.5" fill="#6a6ae4" stroke="#2c2c90" />
            <path d="M4 1.5v1.2M4 3.5v3" stroke="#fff" strokeWidth="1.2" />
          </svg>
          <button aria-label="Close document" className="ml-[19px] w-[7px] h-[7px] flex">
            <svg className="w-[6px] h-[6px]" viewBox="0 0 6 6"><path d="M1 1l4 4M5 1l-4 4" stroke="#4a5f86" strokeWidth="1.2" /></svg>
          </button>
        </div>

        <div className="h-[14px] flex items-center">
          {row1.map((g, i) => <ToolGroup key={i} group={g} />)}
        </div>
        <div className="h-4 flex items-center border-b border-[#6d8088]">
          {row2.map((g, i) => <ToolGroup key={i} group={g} />)}
          <div className="ml-auto mr-[91px]">
            <ToolGroup group={viewModes} active="View 3D" />
          </div>
        </div>

        <Viewport />

        <div className="h-[15px] flex items-center border-t border-[#dfe9ee] text-[7px]">
          <Grip />
          <label htmlFor="command" className="ml-[3px] w-[39px] leading-3">Command:</label>
          <div className="w-[56px] h-3 flex border border-[#8fb4d8] bg-white">
            <input
              id="command"
              ref={commandRef}
              value={command}
              onChange={(e) => setCommand(e.target.value)}
              className="min-w-0 flex-1 pl-0.5 leading-[10px] text-[#1c2430] outline-none selection:bg-[#3399ff] selection:text-white"
            />
            <button aria-label="Command history" className="w-[7px] flex items-center justify-center bg-[#dceaf7] border-l border-[#8fb4d8]">
              <svg className="w-1 h-1" viewBox="0 0 4 4"><path d="M0 1h4l-2 3z" fill="#35507c" /></svg>
            </button>
          </div>
          <button aria-label="Send" className="ml-0.5 mr-[3px] w-3 h-3">
            <svg className="w-[11px] h-[11px]" viewBox="0 0 12 12">{icons.Send}</svg>
          </button>
          {bottomRow.map((g, i) => <ToolGroup key={i} group={g} />)}
        </div>

        <footer className="h-4 flex items-center pl-1 bg-[#d4dbe9] border-t border-[#c3c8d2] text-[7px] leading-3">
          <span>Ready</span>
          <span className="ml-auto w-[11px] h-3 border-l border-[#a3a9b6]" />
          <span className="w-3 h-3 border-l border-[#a3a9b6]" />
          <span className="h-3 border-l border-[#a3a9b6] pl-[6px] pr-1">mm</span>
        </footer>
      </div>
    </div>
  )
}
